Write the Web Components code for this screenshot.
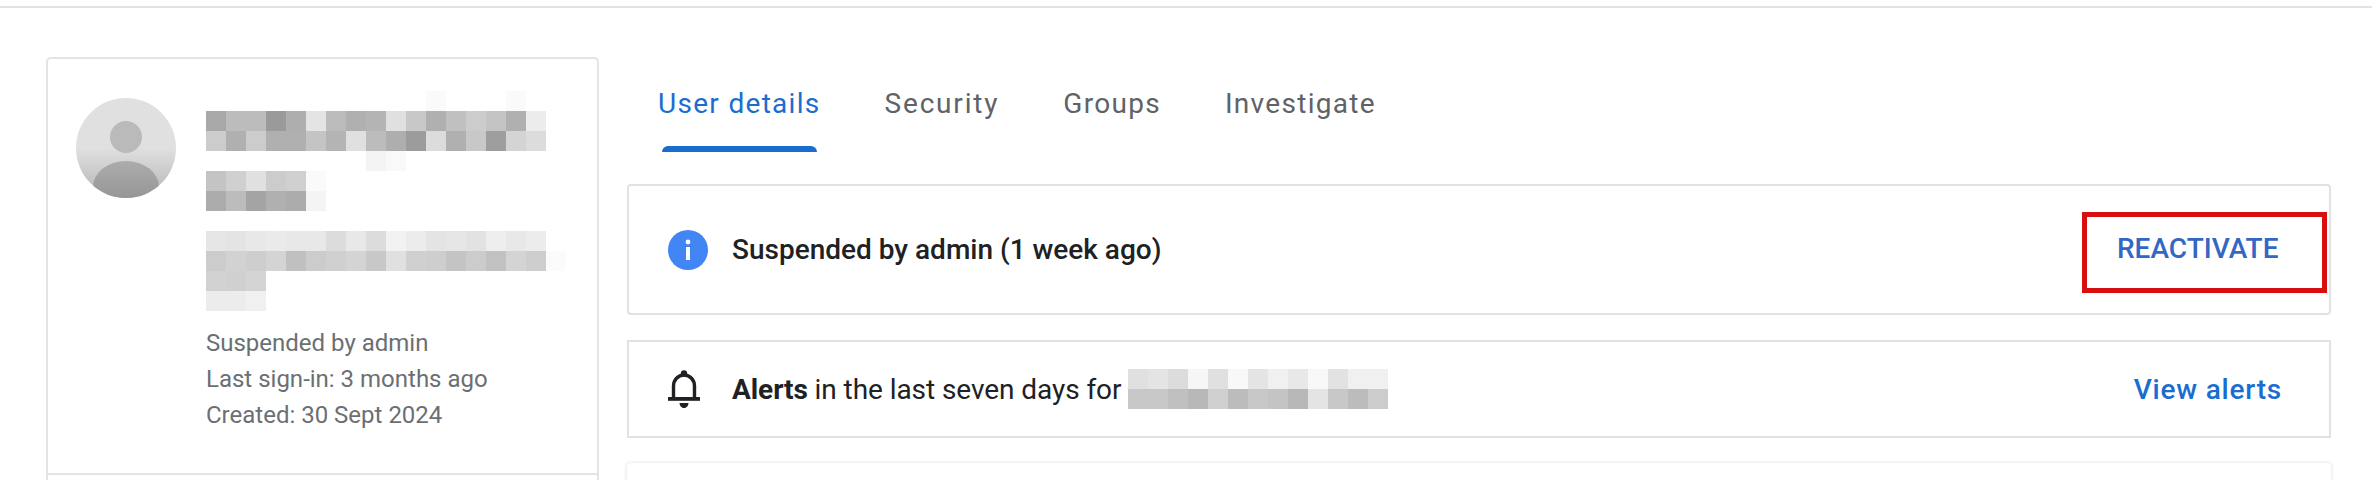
<!DOCTYPE html>
<html lang="en">
<head>
<meta charset="utf-8">
<title>User details</title>
<style>
  html, body { margin: 0; height: 480px; overflow: hidden; background: #fff; }
  body { font-family: Roboto, "Liberation Sans", sans-serif; }
</style>
</head>
<body>
<user-page>
  <profile-card slot="side">
    <pixel-block rows="fa0:11,fa0:15|a8,bc,bc,9a,ae,e4,bc,b0,b4,e0,c8,b0,c0,cc,c4,b0,ec|cc,b0,cc,b0,b0,c4,b4,e0,bc,ae,9c,dc,b0,c8,9e,d4,dc|ff,ff,ff,ff,ff,ff,ff,ff,f4,f9|c4,d0,e0,cc,d0,fa|ac,bc,a4,b0,ac,f4|ff|e6,e4,e8,ea,e8,e8,dc,e8,dc,f2,ec,e4,e6,e2,ee,e8,ec|cc,d2,ce,d4,c0,cc,d0,d4,c8,e0,d0,ce,c4,cc,c2,d4,ce,fb|d2,d0,d4|ec,ec,f0"></pixel-block>
    <span slot="meta">Suspended by admin</span>
    <span slot="meta">Last sign-in: 3 months ago</span>
    <span slot="meta">Created: 30 Sept 2024</span>
  </profile-card>

  <tab-bar slot="main">
    <tab-item active>User details</tab-item>
    <tab-item style="letter-spacing:1.8px">Security</tab-item>
    <tab-item>Groups</tab-item>
    <tab-item>Investigate</tab-item>
  </tab-bar>

  <notice-card slot="main" style="--card-height:131px;--card-radius:4px">
    <info-icon slot="icon"></info-icon>
    <b>Suspended by admin (1 week ago)</b>
    <highlight-action slot="action">REACTIVATE</highlight-action>
  </notice-card>

  <notice-card slot="main" style="--card-height:98px;--card-top:25px">
    <bell-icon slot="icon"></bell-icon>
    <span style="letter-spacing:-.07px"><b>Alerts</b> in the last seven days for</span>
    <pixel-block slot="extra" rows="e0,e4,dc,f6,e0,f8,e4,f0,e8,f8,e2,f0,f0|c8,c8,c0,b8,d0,bc,c8,c4,b8,e4,c8,bc,cc"></pixel-block>
    <link-action slot="action">View alerts</link-action>
  </notice-card>

  <blank-card slot="main"></blank-card>
</user-page>

<script>
// redacted text in the reference: a grid of grey squares
class PixelBlock extends HTMLElement {
  constructor() {
    super();
    this._shadowDOM = this.attachShadow({mode: "open"});
  }

  connectedCallback() {
    const rows = this.getAttribute("rows").split("|");
    let cells = "";
    rows.forEach((row, y) => {
      row.split(",").forEach((cell, x) => {
        // "fa0:11" means a single cell of colour fa at column 11
        let col = x, value = cell;
        if (cell.includes(":")) {
          value = cell.slice(0, 2);
          col = Number(cell.split(":")[1]);
        }
        const c = `#${value}${value}${value}`;
        cells += `<i style="grid-area:${y + 1}/${col + 1};background:${c}"></i>`;
      });
    });
    this._shadowDOM.innerHTML = `
      <style>
        :host { display: grid; grid-auto-rows: 20px; grid-auto-columns: 20px; justify-content: start; }
      </style>
      ${cells}`;
  }
}

class UserAvatar extends HTMLElement {
  constructor() {
    super();
    this.attachShadow({mode: "open"}).innerHTML = `
      <style>
        :host { display: block; width: 100px; height: 100px; flex: none; }
        svg { display: block; }
      </style>
      <svg width="100" height="100" viewBox="0 0 100 100">
        <defs>
          <linearGradient id="bg" x1="0" y1="0" x2="0" y2="1">
            <stop offset="0" stop-color="#e0e0e0"/>
            <stop offset=".5" stop-color="#e0e0e0"/>
            <stop offset="1" stop-color="#b4b4b4"/>
          </linearGradient>
          <linearGradient id="body" x1="0" y1="0" x2="0" y2="1">
            <stop offset="0" stop-color="#acacac"/>
            <stop offset="1" stop-color="#8e8e8e"/>
          </linearGradient>
          <clipPath id="round"><circle cx="50" cy="50" r="50"/></clipPath>
        </defs>
        <g clip-path="url(#round)">
          <rect width="100" height="100" fill="url(#bg)"/>
          <circle cx="50" cy="39" r="16" fill="#bababa"/>
          <ellipse cx="50" cy="89" rx="33" ry="26" fill="url(#body)"/>
        </g>
      </svg>`;
  }
}

class ProfileCard extends HTMLElement {
  constructor() {
    super();
    this.attachShadow({mode: "open"}).innerHTML = `
      <style>
        :host {
          display: block; width: 553px; box-sizing: border-box;
          border: 2px solid #e4e4e4; border-bottom: 0; border-radius: 5px 5px 0 0;
          background: #fff;
        }
        .top { display: flex; gap: 30px; padding: 39px 0 40px 28px; border-bottom: 2px solid #e4e4e4; }
        .info { margin-top: -7px; }
        .meta { margin-top: 14px; display: flex; flex-direction: column; font-size: 24px; line-height: 36px; color: #6b6f73; }
        .body { height: 80px; }
      </style>
      <div class="top">
        <user-avatar></user-avatar>
        <div class="info">
          <slot></slot>
          <div class="meta"><slot name="meta"></slot></div>
        </div>
      </div>
      <div class="body"></div>`;
  }
}

class TabBar extends HTMLElement {
  constructor() {
    super();
    this.attachShadow({mode: "open"}).innerHTML = `
      <style>
        :host { display: flex; gap: 64px; padding: 27px 0 0 31px; height: 95px; box-sizing: border-box; margin-bottom: 32px; }
      </style>
      <slot></slot>`;
  }
}

class TabItem extends HTMLElement {
  constructor() {
    super();
    this.attachShadow({mode: "open"}).innerHTML = `
      <style>
        :host {
          display: block; font-size: 28px; line-height: 40px; letter-spacing: 1.3px;
          color: #5f6368; white-space: nowrap;
        }
        :host([active]) { color: #1a6dd0; }
        .bar { display: none; height: 6px; margin: 22px 4px 0; background: #1a6dd0; border-radius: 6px 6px 0 0; }
        :host([active]) .bar { display: block; }
      </style>
      <slot></slot><div class="bar"></div>`;
  }
}

class NoticeCard extends HTMLElement {
  constructor() {
    super();
    this.attachShadow({mode: "open"}).innerHTML = `
      <style>
        :host {
          display: flex; align-items: center; box-sizing: border-box;
          height: var(--card-height); margin-top: var(--card-top, 0);
          padding-left: 39px; border: 2px solid #e2e2e2; border-radius: var(--card-radius, 0);
          font-size: 28px; color: #202124;
        }
        .icon { width: 64px; flex: none; display: flex; }
        .text { white-space: nowrap; }
        ::slotted(b) { font-weight: 500; }
        .extra { margin-left: 7px; }
        .action { margin-left: auto; display: flex; }
      </style>
      <div class="icon"><slot name="icon"></slot></div>
      <div class="text"><slot></slot></div>
      <div class="extra"><slot name="extra"></slot></div>
      <div class="action"><slot name="action"></slot></div>`;
  }
}

class HighlightAction extends HTMLElement {
  constructor() {
    super();
    this.attachShadow({mode: "open"}).innerHTML = `
      <style>
        :host {
          display: block; box-sizing: border-box; width: 245px; height: 81px; margin: 5px 2px 0 0;
          border: 5px solid #d80f0f; padding-left: 30px;
          font-size: 28px; font-weight: 500; line-height: 63px; color: #3367c4;
        }
      </style>
      <slot></slot>`;
  }
}

class LinkAction extends HTMLElement {
  constructor() {
    super();
    this.attachShadow({mode: "open"}).innerHTML = `
      <style>
        :host { display: block; margin-right: 47px; font-size: 28px; font-weight: 500; letter-spacing: .8px; color: #1a6dd0; }
      </style>
      <slot></slot>`;
  }
}

class InfoIcon extends HTMLElement {
  constructor() {
    super();
    this.attachShadow({mode: "open"}).innerHTML = `
      <style>:host { display: block; width: 40px; height: 40px; } svg { display: block; }</style>
      <svg width="40" height="40" viewBox="0 0 40 40">
        <circle cx="20" cy="20" r="20" fill="#4285f4"/>
        <rect x="18" y="17" width="4" height="13" fill="#fff"/>
        <circle cx="20" cy="12" r="2.4" fill="#fff"/>
      </svg>`;
  }
}

class BellIcon extends HTMLElement {
  constructor() {
    super();
    this.attachShadow({mode: "open"}).innerHTML = `
      <style>:host { display: block; width: 32px; height: 38px; } svg { display: block; }</style>
      <svg width="32" height="38" viewBox="0 0 32 38" fill="none">
        <circle cx="16" cy="3.400" r="3.200" fill="#202124"/>
        <path d="M5.500 29V16C5.500 10 10 5 16 5s10.500 5 10.500 11V29" stroke="#202124" stroke-width="3.400"/>
        <rect x="0" y="27" width="32" height="3.800" fill="#202124"/>
        <path d="M11.500 33h9c0 3-2.500 5-4.500 5s-4.500-2-4.500-5z" fill="#202124"/>
      </svg>`;
  }
}

class BlankCard extends HTMLElement {
  constructor() {
    super();
    this.attachShadow({mode: "open"}).innerHTML = `
      <style>
        :host {
          display: block; height: 120px; margin-top: 25px;
          border-radius: 4px; background: #fff;
          box-shadow: 0 0 4px rgba(0, 0, 0, .14);
        }
      </style>`;
  }
}

class UserPage extends HTMLElement {
  constructor() {
    super();
    this.attachShadow({mode: "open"}).innerHTML = `
      <style>
        :host { display: block; height: 480px; overflow: hidden; }
        .rule { height: 6px; border-bottom: 2px solid #e2e2e2; }
        .layout { display: flex; gap: 28px; padding: 49px 41px 0 46px; }
        .main { flex: 1; min-width: 0; }
      </style>
      <div class="rule"></div>
      <div class="layout">
        <slot name="side"></slot>
        <div class="main"><slot name="main"></slot></div>
      </div>`;
  }
}

customElements.define("pixel-block", PixelBlock);
customElements.define("user-avatar", UserAvatar);
customElements.define("profile-card", ProfileCard);
customElements.define("tab-bar", TabBar);
customElements.define("tab-item", TabItem);
customElements.define("notice-card", NoticeCard);
customElements.define("highlight-action", HighlightAction);
customElements.define("link-action", LinkAction);
customElements.define("info-icon", InfoIcon);
customElements.define("bell-icon", BellIcon);
customElements.define("blank-card", BlankCard);
customElements.define("user-page", UserPage);
</script>
</body>
</html>
